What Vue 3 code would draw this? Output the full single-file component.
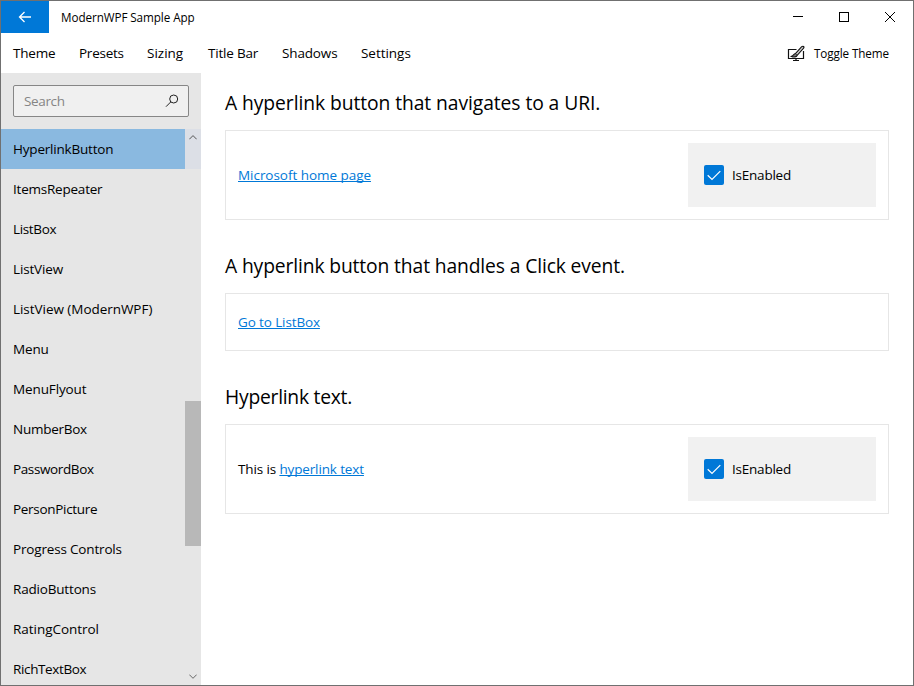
<script setup>
import { ref } from 'vue'

const menu = ref([
  { label: 'Theme', w: 42, ls: -0.2 },
  { label: 'Presets', w: 44, ls: -0.25 },
  { label: 'Sizing', w: 37, ls: 0 },
  { label: 'Title Bar', w: 50, ls: -0.2 },
  { label: 'Shadows', w: 55, ls: -0.15 },
  { label: 'Settings', w: 50, ls: -0.03 },
])

const pages = [
  { name: 'HyperlinkButton', ls: -0.2 },
  { name: 'ItemsRepeater', ls: -0.22 },
  { name: 'ListBox', ls: -0.35 },
  { name: 'ListView', ls: -0.15 },
  { name: 'ListView (ModernWPF)', ls: -0.04 },
  { name: 'Menu', ls: -0.15 },
  { name: 'MenuFlyout', ls: -0.12 },
  { name: 'NumberBox', ls: -0.26 },
  { name: 'PasswordBox', ls: -0.38 },
  { name: 'PersonPicture', ls: -0.3 },
  { name: 'Progress Controls', ls: -0.17 },
  { name: 'RadioButtons', ls: -0.18 },
  { name: 'RatingControl', ls: -0.04 },
  { name: 'RichTextBox', ls: -0.36 },
]
const selected = ref('HyperlinkButton')

const samples = ref([
  { title: 'A hyperlink button that navigates to a URI.', cls: 'uri', before: '', link: 'Microsoft home page', option: true },
  { title: 'A hyperlink button that handles a Click event.', cls: 'click', before: '', link: 'Go to ListBox', option: false },
  { title: 'Hyperlink text.', cls: 'inline', before: 'This is ', link: 'hyperlink text', option: true },
])
</script>

<template>
  <div class="window">
    <header class="titlebar">
      <button class="back" aria-label="Back">
        <svg width="14" height="12" viewBox="0 0 14 12"><path d="M6.500 1 1.500 6l5 5M1.500 6h11.500" fill="none" stroke="#fff" stroke-width="1.300" /></svg>
      </button>
      <span class="apptitle">ModernWPF Sample App</span>
      <div class="caption">
        <button aria-label="Minimize"><svg width="10" height="10" viewBox="0 0 10 10"><path d="M0 4.500h10" stroke="#000" /></svg></button>
        <button aria-label="Maximize"><svg width="10" height="10" viewBox="0 0 10 10"><rect x=".5" y=".5" width="9" height="9" fill="none" stroke="#000" /></svg></button>
        <button aria-label="Close"><svg width="10" height="10" viewBox="0 0 10 10"><path d="M0 0l10 10M10 0 0 10" stroke="#000" /></svg></button>
      </div>
    </header>

    <nav class="menubar">
      <a v-for="m in menu" :key="m.label" class="menuitem"><span :style="{ width: m.w + 'px', letterSpacing: m.ls + 'px' }">{{ m.label }}</span></a>
      <button class="toggle">
        <svg width="18" height="17" viewBox="0 0 18 17" fill="none" stroke="#111">
          <path d="M9.500 4.500h-8v9h15v-7.500" stroke-width="1.200" />
          <path d="M9 13.500v2M6 15.500h6" stroke-width="1.200" />
          <path d="M8.200 8.800 14.700 1.700q1.100-.9 1.900-.2t-.2 1.900L10 10.500z" fill="#ccc" stroke-width="1.100" />
          <path d="M8.200 8.800c-1.900.1-1.700 2-3.700 2.600 2.300 1 5 .6 5.500-.9" fill="#777" stroke-width="1.100" />
        </svg>
        <span>Toggle Theme</span>
      </button>
    </nav>

    <div class="body">
      <aside class="side">
        <div class="search">
          <span>Search</span>
          <svg width="14" height="14" viewBox="0 0 14 14" fill="none" stroke="#222"><circle cx="8.700" cy="5" r="4" /><path d="M5.800 7.900 1 12.700" /></svg>
        </div>
        <div class="listwrap">
          <ul class="list">
            <li v-for="p in pages" :key="p.name" :class="{ active: p.name === selected }" @click="selected = p.name">
              <span :style="{ letterSpacing: p.ls + 'px' }">{{ p.name }}</span>
            </li>
          </ul>
          <div class="scroll">
            <svg class="up" width="8" height="5" viewBox="0 0 8 5"><path d="M.3 4.300 4 .6l3.700 3.700" fill="none" stroke="#555" /></svg>
            <div class="thumb"></div>
            <svg class="down" width="8" height="5" viewBox="0 0 8 5"><path d="M.3 .6 4 4.300 7.700 .6" fill="none" stroke="#666" /></svg>
          </div>
        </div>
      </aside>

      <main class="content">
        <section v-for="s in samples" :key="s.cls" :class="s.cls">
          <h2>{{ s.title }}</h2>
          <div class="card">
            <p><span class="pre">{{ s.before }}</span><a>{{ s.link }}</a></p>
            <div v-if="s.option" class="option">
              <span class="box"><svg width="20" height="20" viewBox="0 0 20 20"><path d="M3.700 10.200 8 14.400l8.300-8.300" fill="none" stroke="#fff" stroke-width="1.200" /></svg></span>
              <span>IsEnabled</span>
            </div>
          </div>
        </section>
      </main>
    </div>
  </div>
</template>

<style>
body { overflow: hidden; background: #fff; }
</style>

<style scoped>
* { box-sizing: border-box; }
.window {
  width: 914px; height: 686px; border: 1px solid #707070; background: #fff;
  display: flex; flex-direction: column; overflow: hidden;
  font: 13.5px/20px "Segoe UI", "Open Sans", "Noto Sans", sans-serif; color: #000; white-space: nowrap;
}
button { border: 0; background: none; padding: 0; font: inherit; color: inherit; display: flex; align-items: center; justify-content: center; }
svg { display: block; flex: none; }
.titlebar { height: 32px; flex: none; display: flex; align-items: center; }
.back { width: 48px; height: 32px; background: #0078d7; }
.apptitle { margin-left: 12px; margin-top: -1px; font-size: 11.7px; letter-spacing: -.08px; }
.caption { margin-left: auto; display: flex; }
.caption button { width: 46px; height: 32px; }
.menubar { height: 40px; flex: none; display: flex; align-items: center; padding-right: 24px; }
.menuitem { padding: 0 12px; }
.menuitem span { display: block; }
.toggle { margin-left: auto; gap: 9px; font-size: 11.7px; letter-spacing: -.1px; }
.toggle span { margin-top: -1px; }
.body { flex: 1; min-height: 0; display: flex; }
.side { width: 200px; flex: none; background: #e6e6e6; display: flex; flex-direction: column; }
.search { margin: 12px; height: 32px; flex: none; border: 1px solid #868686; border-radius: 2px; background: #f0f0f0; display: flex; align-items: center; justify-content: space-between; padding: 0 9px 0 10px; color: #858585; letter-spacing: -.35px; }
.listwrap { flex: 1; min-height: 0; display: flex; }
.list { list-style: none; margin: 0; padding: 0; width: 184px; overflow: hidden; }
.list li { height: 40px; padding-left: 12px; display: flex; align-items: center; }
.list li.active { background: #8ab9e0; }
.scroll { width: 16px; display: flex; flex-direction: column; align-items: center; background: linear-gradient(#dcdfe6 40px, transparent 40px); }
.up { margin-top: 6px; }
.thumb { width: 16px; height: 145px; margin-top: 261px; background: #b8b8b8; }
.down { margin-top: auto; margin-bottom: 6px; }
.content { flex: 1; padding: 16px 24px; display: flex; flex-direction: column; gap: 32px; }
h2 { margin: 0 0 13px; font-weight: 400; font-size: 19.3px; line-height: 28px; letter-spacing: -.08px; }
.click h2 { letter-spacing: -.135px; }
.inline h2 { letter-spacing: -.25px; }
.card { border: 1px solid #e6e6e6; padding: 12px; min-height: 58px; display: flex; align-items: center; justify-content: space-between; }
p { margin: 0; letter-spacing: -.04px; }
.click p { letter-spacing: -.12px; }
.inline p { letter-spacing: -.13px; }
.pre { white-space: pre; }
a { color: inherit; }
p a { color: #0078d7; text-decoration: underline 1px; text-decoration-skip-ink: none; text-underline-offset: 1px; }
.option { width: 188px; height: 64px; background: #f1f1f1; padding: 0 16px; display: flex; align-items: center; gap: 8px; letter-spacing: -.22px; }
.box { width: 20px; height: 20px; border-radius: 2px; background: #0078d7; }
</style>
